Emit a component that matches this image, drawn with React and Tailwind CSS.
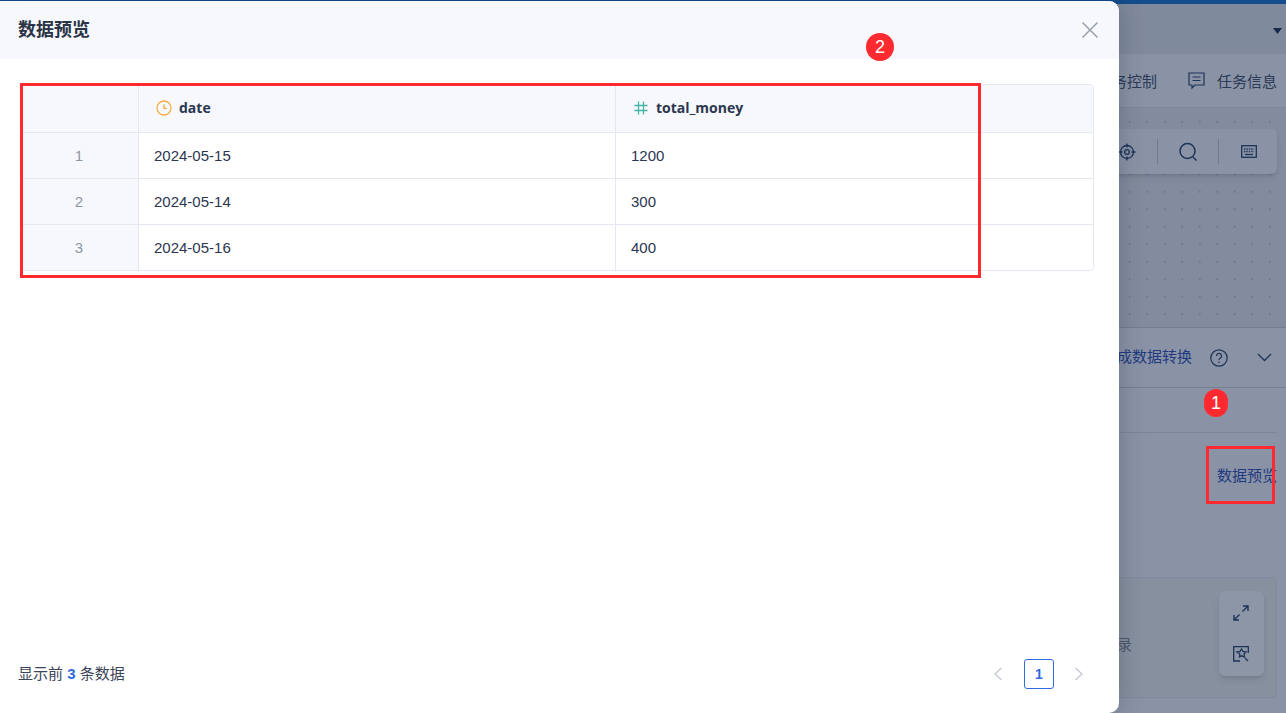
import React from "react";

const cjk = "font-['Liberation_Sans','Noto_Sans_CJK_SC',sans-serif]";

function Background() {
  return (
    <div className="flex h-[713px] w-[1286px] flex-col overflow-hidden bg-[#87909f] text-[#26344f]">
      <div className="h-[4px] shrink-0 bg-[#134d8c]" />
      <div className="flex h-[50px] shrink-0 items-center justify-end bg-[#7f8a9c] pr-[3px]">
        <svg width="10" height="6" viewBox="0 0 10 6" className="mt-[4px]"><path d="M0 0h9L4.5 6z" fill="#172a4a" /></svg>
      </div>
      <div className="flex h-[54px] shrink-0 items-center justify-end gap-[31px] whitespace-nowrap border-b border-[#7e8899] bg-[#8a93a5] pr-[9px] pt-[3px] text-[15px] text-[#2b3a56]">
        <span>任务控制</span>
        <span className="flex items-center gap-[12px]">
          <svg width="17" height="17" viewBox="0 0 17 17" fill="none" stroke="#1d3358" strokeWidth="1.2" className="mb-[3px]"><path d="M1 1h15v12H7l-3 3v-3H1z" /><path d="M4.5 5h8M4.5 8.5h8" /></svg>
          任务信息
        </span>
      </div>
      <div className="flex h-[219px] shrink-0 flex-col items-end bg-[#838c9e] bg-[radial-gradient(circle,#6f7a8d_1px,transparent_1.5px)] bg-[size:17.5px_17.5px] bg-[position:1px_5px] pr-[9px] pt-[21px]">
        <div className="flex h-[45px] w-[200px] items-center justify-end rounded-md bg-[#8a93a5] pr-[20px] shadow-md">
          <svg width="20" height="20" viewBox="0 0 20 20" fill="none" stroke="#1d3358" strokeWidth="1.3"><circle cx="10" cy="10" r="6.5" /><circle cx="10" cy="10" r="2.3" /><path d="M10 1.5v4M10 14.5v4M1.5 10h4M14.5 10h4" /></svg>
          <div className="mx-[20px] h-[25px] w-px bg-[#6f7a8d]" />
          <svg width="20" height="20" viewBox="0 0 20 20" fill="none" stroke="#1d3358" strokeWidth="1.5"><circle cx="9.5" cy="9" r="7.5" /><path d="M15 15l3.5 3.5" /></svg>
          <div className="ml-[20px] mr-[22px] h-[25px] w-px bg-[#6f7a8d]" />
          <svg width="16" height="13" viewBox="0 0 16 13" fill="none" stroke="#1d3358" strokeWidth="1.3"><rect x=".7" y=".7" width="14.6" height="11.6" /><path d="M3 4h10M3 6.5h10" strokeDasharray="1.4 1" /><path d="M4 9.5h8" /></svg>
        </div>
      </div>
      <div className="flex h-[61px] shrink-0 items-center justify-end whitespace-nowrap border-y border-[#737e90] bg-[#8a93a5] pr-[14px] text-[15px] text-[#1f3a80]">
        <span>完成数据转换</span>
        <svg width="18" height="18" viewBox="0 0 18 18" fill="none" stroke="#1d3358" strokeWidth="1.2" className="ml-[18px]"><circle cx="9" cy="9" r="8.2" /><path d="M6.5 7a2.5 2.5 0 1 1 3.6 2.2c-.8.4-1.1.9-1.1 1.8" /><path d="M9 12.6v1.4" /></svg>
        <svg width="15" height="9" viewBox="0 0 15 9" fill="none" stroke="#1d3358" strokeWidth="1.3" className="ml-[29px]"><path d="M1 1l6.5 6.5L14 1" /></svg>
      </div>
      <div className="flex h-[325px] shrink-0 flex-col bg-[#8a93a5] pb-[15px] pr-[9px]">
        <div className="h-[45px] shrink-0 border-b border-[#7c8698]" />
        <div className="flex flex-1 justify-end whitespace-nowrap pt-[32px] text-[15px] text-[#1f3a80]">
          <span>数据预览</span>
        </div>
        <div className="flex h-[121px] shrink-0 items-start justify-end rounded border border-[#7f8a9c] bg-[#87909f] pr-[12px] pt-[13px]">
          <span className="mr-[87px] mt-[43px] text-[15px] text-[#4d586c]">录</span>
          <div className="flex h-[85px] w-[45px] flex-col items-center justify-center gap-[25px] rounded-md bg-[#8d96a7] pr-[2px] shadow-md">
            <svg width="16" height="16" viewBox="0 0 16 16" fill="none" stroke="#1d3358" strokeWidth="1.4"><path d="M1 15L6.5 9.5M1 10v5h5" /><path d="M15 1L9.5 6.5M10 1h5v5" /></svg>
            <svg width="16" height="16" viewBox="0 0 16 16" fill="none" stroke="#1d3358" strokeWidth="1.3"><path d="M7 15H.7V.7h14.6V7" /><path d="M4 6l3-.5L8.500 3l1.500 2.500 3 .5-2 2 .5 3-3-1.200-2 1 .3-3z" /><path d="M12 12l3 3" /></svg>
          </div>
        </div>
      </div>
    </div>
  );
}

function Clock() {
  return (
    <svg width="16" height="16" viewBox="0 0 16 16" fill="none" stroke="#f5ac4a" strokeWidth="1.3"><circle cx="8" cy="8" r="7" /><path d="M8 4.200V8.300h3" /></svg>
  );
}

function Hash() {
  return (
    <svg width="14" height="14" viewBox="0 0 14 14" fill="none" stroke="#45b3a6" strokeWidth="1.3"><path d="M4.500 .5v13M9.500 .5v13M.5 4.500h13M.5 9.500h13" /></svg>
  );
}

const rows = [
  ["1", "2024-05-15", "1200"],
  ["2", "2024-05-14", "300"],
  ["3", "2024-05-16", "400"],
];

function Modal() {
  return (
    <div className="absolute left-0 top-[1px] flex h-[712px] w-[1119px] flex-col overflow-hidden rounded-r-[10px] bg-white shadow-[0_0_24px_rgba(20,30,50,0.25)]">
      <div className="flex h-[58px] shrink-0 items-center justify-between bg-[#f7f8fc] pl-[18px] pr-[20px]">
        <span className="text-[18px] font-bold text-[#2b3447]">数据预览</span>
        <svg width="18" height="18" viewBox="0 0 18 18" fill="none" stroke="#9aa0ac" strokeWidth="1.5"><path d="M1.500 1.500l15 15M16.500 1.500l-15 15" /></svg>
      </div>
      <div className="mx-[22px] mt-[25px] w-[1072px] overflow-hidden rounded border border-[#e6e8f1] text-[15px] text-[#2b3650]">
        <div className="flex h-[48px] border-b border-[#e6e8f1] bg-[#f7f8fc] text-sm font-bold">
          <div className="w-[116px] shrink-0 border-r border-[#e6e8f1]" />
          <div className="flex w-[477px] shrink-0 items-center gap-[7px] border-r border-[#e6e8f1] pb-[2px] pl-[17px] font-['Open_Sans',sans-serif]"><Clock /><span>date</span></div>
          <div className="flex flex-1 items-center gap-[8px] pb-[2px] pl-[18px] font-['Open_Sans',sans-serif]"><Hash /><span>total_money</span></div>
        </div>
        {rows.map((r, i) => (
          <div key={r[0]} className={i < 2 ? "flex h-[46px] border-b border-[#e6e8f1]" : "flex h-[45px]"}>
            <div className="flex w-[116px] shrink-0 items-center justify-center border-r border-[#e6e8f1] bg-[#f7f8fc] pr-[3px] pt-px text-[#8e96a3]">{r[0]}</div>
            <div className="flex w-[477px] shrink-0 items-center border-r border-[#e6e8f1] pl-[15px] pt-px">{r[1]}</div>
            <div className="flex flex-1 items-center pl-[15px] pt-px">{r[2]}</div>
          </div>
        ))}
      </div>
      <div className="flex-1" />
      <div className="flex h-[54px] shrink-0 items-start justify-between pl-[18px] pr-[35px]">
        <span className="pt-[4px] text-[15px] text-[#3a445a]">显示前 <b className="text-[#2f6bdc]">3</b> 条数据</span>
        <div className="flex items-center">
          <svg width="10" height="14" viewBox="0 0 10 14" fill="none" stroke="#c4c9d4" strokeWidth="1.4"><path d="M8.500 1L2 7l6.500 6" /></svg>
          <div className="ml-[21px] mr-[20px] flex h-[30px] w-[30px] items-center justify-center rounded-[3px] border border-[#2f6bdc] text-sm font-bold text-[#2f6bdc]">1</div>
          <svg width="10" height="14" viewBox="0 0 10 14" fill="none" stroke="#c4c9d4" strokeWidth="1.4"><path d="M1.500 1L8 7l-6.500 6" /></svg>
        </div>
      </div>
    </div>
  );
}

export default function App() {
  return (
    <div className={`relative h-[713px] w-[1286px] overflow-hidden ${cjk}`}>
      <Background />
      <Modal />
      <div className="absolute left-[20px] top-[83px] h-[195px] w-[961px] border-[3px] border-[#ff2a30]" />
      <div className="absolute left-[1206px] top-[446px] h-[58px] w-[69px] border-[3px] border-[#ff2a30]" />
      <div className="absolute left-[866px] top-[33px] flex h-[28px] w-[28px] items-center justify-center rounded-full bg-[#ff2a30] text-[18px] text-white">2</div>
      <div className="absolute left-[1204px] top-[389px] flex h-[28px] w-[24px] items-center justify-center rounded-full bg-[#ff2a30] text-[18px] text-white">1</div>
    </div>
  );
}
